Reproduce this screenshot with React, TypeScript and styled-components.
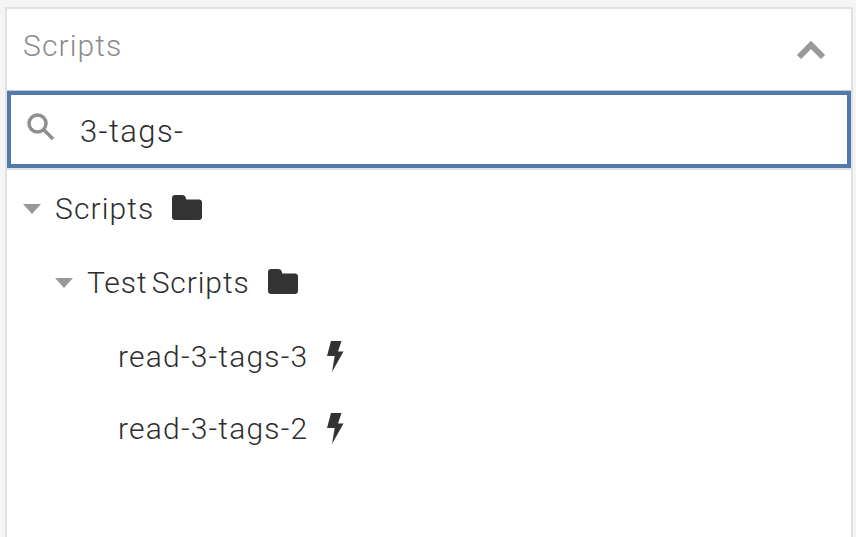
import React from "react";
import styled, { createGlobalStyle } from "styled-components";

const Global = createGlobalStyle`
  html, body { margin: 0; padding: 0; height: 100%; background: #f5f5f5; overflow: hidden; }
  #root { height: 100%; }
`;

const Page = styled.div`
  height: 537px;
  box-sizing: border-box;
  padding: 7px 3px 0 5px;
  font-family: Roboto, "Liberation Sans", sans-serif;
`;

const Panel = styled.section`
  height: 530px;
  box-sizing: border-box;
  background: #fff;
  border: solid #e1e1e1;
  border-width: 2px 2px 0 2px;
`;

const Header = styled.header`
  height: 82px;
  box-sizing: border-box;
  display: flex;
  align-items: center;
  justify-content: space-between;
  padding: 0 25px 0 16px;
  border-bottom: 1px solid #c8c8c8;
`;

const Title = styled.h2`
  margin: 0 0 8px;
  font-size: 30px;
  font-weight: 300;
  color: #8c8c8c;
  letter-spacing: 1.1px;
  line-height: 1;
`;

const SearchBox = styled.div`
  height: 77px;
  box-sizing: border-box;
  display: flex;
  align-items: center;
  gap: 25px;
  padding: 0 0 0 16px;
  border: 4px solid #5279ae;
`;

const SearchIcon = styled.svg`
  margin-bottom: 5px;
`;

const SearchText = styled.span`
  font-size: 31px;
  font-weight: 300;
  color: #2e2e2e;
  letter-spacing: 1.4px;
  padding-top: 3px;
`;

const Tree = styled.ul`
  list-style: none;
  margin: 0;
  padding: 0;
  border-top: 2px solid #e1e1e1;
`;

const Row = styled.li<{ $indent: number; $height: number }>`
  height: ${(p) => p.$height}px;
  display: flex;
  align-items: center;
  padding-left: ${(p) => p.$indent}px;
  font-size: 30px;
  font-weight: 300;
  color: #2e2e2e;
  letter-spacing: 1.1px;
`;

const Caret = styled.span`
  width: 0;
  height: 0;
  margin-right: 14px;
  border-left: 9.5px solid transparent;
  border-right: 9.5px solid transparent;
  border-top: 10px solid #999;
`;

const Label = styled.span<{ $spacing?: number }>`
  margin-right: 18px;
  letter-spacing: ${(p) => p.$spacing ?? 1.1}px;
  word-spacing: -4px;
`;

const FolderIcon = styled.svg`
  margin-bottom: 3px;
`;

const Folder = () => (
  <FolderIcon width="30" height="25" viewBox="0 0 30 25" aria-hidden="true">
    <path
      d="M3 0h7.500c1.500 0 2.400.7 3 2l.8 2.500H27c1.700 0 3 1.300 3 3V22c0 1.700-1.300 3-3 3H3c-1.700 0-3-1.300-3-3V3c0-1.700 1.300-3 3-3z"
      fill="#333"
    />
  </FolderIcon>
);

const BoltIcon = styled.svg`
  margin-left: 1px;
`;

const Bolt = () => (
  <BoltIcon width="17" height="31" viewBox="0 0 17 31" aria-hidden="true">
    <path d="M4 0h10.500L11 10.500h5.500L5 31l2.700-16H0z" fill="#333" />
  </BoltIcon>
);

const Search = () => (
  <SearchIcon width="28" height="28" viewBox="0 0 28 28" aria-hidden="true">
    <circle cx="10.500" cy="10.500" r="8.500" fill="none" stroke="#8f8f8f" strokeWidth="3.500" />
    <path d="M16.500 16.500l9.500 9.500" stroke="#8f8f8f" strokeWidth="3.500" fill="none" />
  </SearchIcon>
);

const Chevron = () => (
  <svg width="30" height="20" viewBox="0 0 30 20" aria-hidden="true">
    <path d="M3 17L15 5l12 12" fill="none" stroke="#999" strokeWidth="6" />
  </svg>
);

export default function App() {
  return (
    <Page>
      <Global />
      <Panel>
        <Header>
          <Title>Scripts</Title>
          <Chevron />
        </Header>
        <SearchBox>
          <Search />
          <SearchText>3-tags-</SearchText>
        </SearchBox>
        <Tree>
          <Row $indent={16} $height={77}>
            <Caret />
            <Label>Scripts</Label>
            <Folder />
          </Row>
          <Row $indent={48} $height={71}>
            <Caret />
            <Label $spacing={0.9}>Test Scripts</Label>
            <Folder />
          </Row>
          <Row $indent={111} $height={76}>
            <Label $spacing={1.2}>read-3-tags-3</Label>
            <Bolt />
          </Row>
          <Row $indent={111} $height={68}>
            <Label $spacing={1.2}>read-3-tags-2</Label>
            <Bolt />
          </Row>
        </Tree>
      </Panel>
    </Page>
  );
}
